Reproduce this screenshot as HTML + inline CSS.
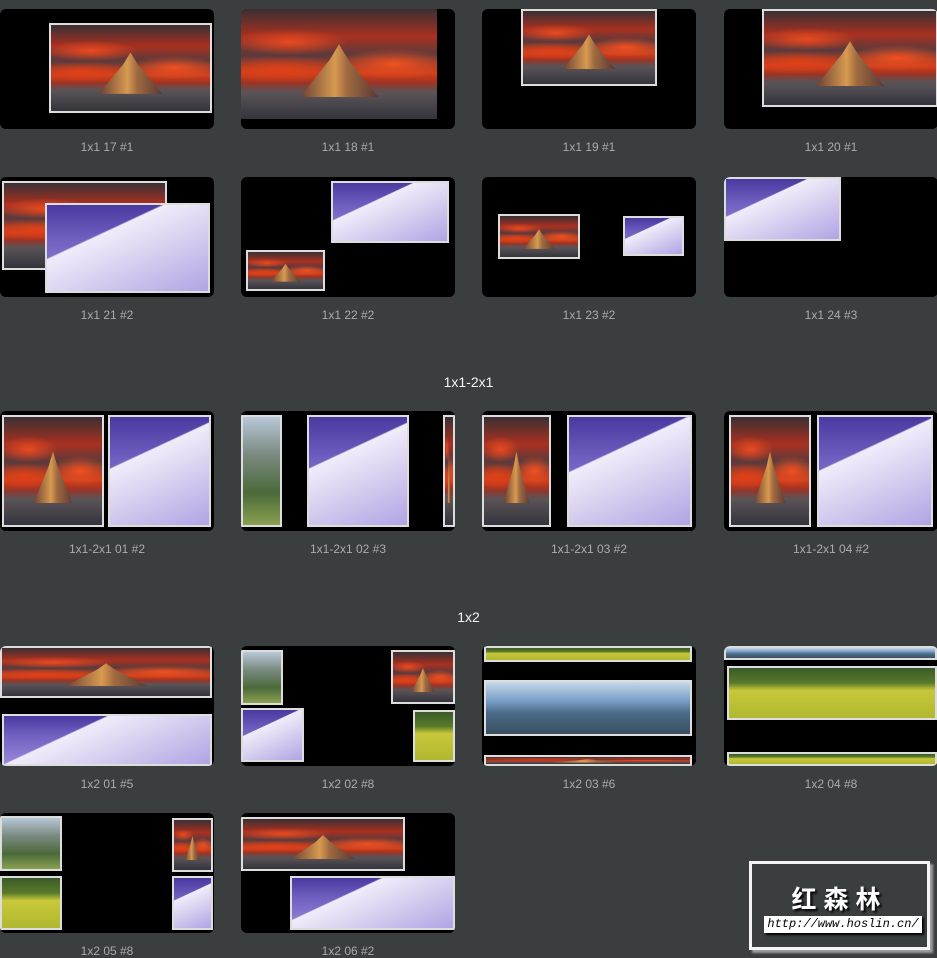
<!DOCTYPE html>
<html><head><meta charset="utf-8"><style>
*{margin:0;padding:0;box-sizing:border-box}
body{width:937px;height:954px;background:#3a3e3e;position:relative;overflow:hidden;font-family:"Liberation Sans",sans-serif}
.c{position:absolute;width:214px;height:120px;background:#000;border-radius:6px;overflow:hidden}
.i{position:absolute;overflow:hidden}
.b{border:2px solid #ddd}
.red{background:
 linear-gradient(180deg,transparent 66%,#5a5458 76%,#34343c 100%),
 radial-gradient(ellipse 30% 12% at 25% 30%,#e84a20,transparent),
 radial-gradient(ellipse 30% 14% at 78% 50%,#f05020,transparent),
 radial-gradient(ellipse 35% 12% at 20% 55%,#e04018,transparent),
 linear-gradient(180deg,#3a3034 0%,#a83020 25%,#5a3a3c 42%,#d0401c 58%,#a03020 68%)}
.red::after{content:"";position:absolute;left:30%;right:30%;top:32%;bottom:20%;background:linear-gradient(90deg,#6a4034,#d89a50 45%,#a06a40 60%,#5a3a34);clip-path:polygon(50% 0,62% 30%,100% 100%,0 100%,38% 30%)}
.snow{background:
 linear-gradient(155deg,transparent 33%,#f0ecfa 34%,#d8d0f0 60%,#b0a4e4 100%),
 linear-gradient(180deg,#4a3aa0 0%,#7060c0 40%,#9a88d8 100%)}
.grn{background:linear-gradient(180deg,#b8c8d8 0%,#7a8a80 35%,#4a6a3a 70%,#8aa050 100%)}
.yel{background:linear-gradient(180deg,#3a5a2a 0%,#5a7a2a 30%,#c8c83a 45%,#b0b830 100%)}
.blu{background:linear-gradient(180deg,#c8d8e8 0%,#7aa0c8 35%,#4a6a88 60%,#3a5060 100%)}
.l{position:absolute;width:214px;text-align:center;color:#a8acac;font-size:12px}
.h{position:absolute;width:937px;text-align:center;color:#f4f4f4;font-size:14px}
</style></head><body>

<div class="c" style="left:0;top:9px"><div class="i b red" style="left:49px;top:14px;width:163px;height:90px"></div></div>
<div class="c" style="left:241px;top:9px"><div class="i red" style="left:0;top:0;width:196px;height:110px"></div></div>
<div class="c" style="left:482px;top:9px"><div class="i b red" style="left:39px;top:0;width:136px;height:77px"></div></div>
<div class="c" style="left:724px;top:9px"><div class="i b red" style="left:38px;top:0;width:176px;height:98px"></div></div>
<div class="l" style="left:0;top:140px">1x1 17 #1</div>
<div class="l" style="left:241px;top:140px">1x1 18 #1</div>
<div class="l" style="left:482px;top:140px">1x1 19 #1</div>
<div class="l" style="left:724px;top:140px">1x1 20 #1</div>

<div class="c" style="left:0;top:177px"><div class="i b red" style="left:2px;top:4px;width:165px;height:89px"></div><div class="i b snow" style="left:45px;top:26px;width:165px;height:90px"></div></div>
<div class="c" style="left:241px;top:177px"><div class="i b snow" style="left:90px;top:4px;width:118px;height:62px"></div><div class="i b red" style="left:5px;top:73px;width:79px;height:41px"></div></div>
<div class="c" style="left:482px;top:177px"><div class="i b red" style="left:16px;top:37px;width:82px;height:45px"></div><div class="i b snow" style="left:141px;top:39px;width:61px;height:40px"></div></div>
<div class="c" style="left:724px;top:177px"><div class="i b snow" style="left:0;top:0;width:117px;height:64px"></div></div>
<div class="l" style="left:0;top:308px">1x1 21 #2</div>
<div class="l" style="left:241px;top:308px">1x1 22 #2</div>
<div class="l" style="left:482px;top:308px">1x1 23 #2</div>
<div class="l" style="left:724px;top:308px">1x1 24 #3</div>

<div class="h" style="top:374px">1x1-2x1</div>

<div class="c" style="left:0;top:411px"><div class="i b red" style="left:2px;top:4px;width:102px;height:112px"></div><div class="i b snow" style="left:108px;top:4px;width:103px;height:112px"></div></div>
<div class="c" style="left:241px;top:411px"><div class="i b grn" style="left:0;top:4px;width:41px;height:112px"></div><div class="i b snow" style="left:66px;top:4px;width:102px;height:112px"></div><div class="i b red" style="left:202px;top:4px;width:12px;height:112px"></div></div>
<div class="c" style="left:482px;top:411px"><div class="i b red" style="left:0;top:4px;width:69px;height:112px"></div><div class="i b snow" style="left:85px;top:4px;width:125px;height:112px"></div></div>
<div class="c" style="left:724px;top:411px"><div class="i b red" style="left:5px;top:4px;width:82px;height:112px"></div><div class="i b snow" style="left:93px;top:4px;width:116px;height:112px"></div></div>
<div class="l" style="left:0;top:542px">1x1-2x1 01 #2</div>
<div class="l" style="left:241px;top:542px">1x1-2x1 02 #3</div>
<div class="l" style="left:482px;top:542px">1x1-2x1 03 #2</div>
<div class="l" style="left:724px;top:542px">1x1-2x1 04 #2</div>

<div class="h" style="top:609px">1x2</div>

<div class="c" style="left:0;top:646px"><div class="i b red" style="left:0;top:0;width:212px;height:52px"></div><div class="i b snow" style="left:2px;top:68px;width:210px;height:52px"></div></div>
<div class="c" style="left:241px;top:646px"><div class="i b grn" style="left:0;top:4px;width:42px;height:55px"></div><div class="i b snow" style="left:0;top:62px;width:63px;height:54px"></div><div class="i b red" style="left:150px;top:4px;width:64px;height:54px"></div><div class="i b yel" style="left:172px;top:64px;width:42px;height:52px"></div></div>
<div class="c" style="left:482px;top:646px"><div class="i b yel" style="left:2px;top:0;width:208px;height:16px"></div><div class="i b blu" style="left:2px;top:34px;width:208px;height:56px"></div><div class="i b red" style="left:2px;top:109px;width:208px;height:11px"></div></div>
<div class="c" style="left:724px;top:646px"><div class="i b blu" style="left:0;top:0;width:213px;height:14px"></div><div class="i b yel" style="left:3px;top:20px;width:210px;height:54px"></div><div class="i b yel" style="left:3px;top:106px;width:210px;height:14px"></div></div>
<div class="l" style="left:0;top:777px">1x2 01 #5</div>
<div class="l" style="left:241px;top:777px">1x2 02 #8</div>
<div class="l" style="left:482px;top:777px">1x2 03 #6</div>
<div class="l" style="left:724px;top:777px">1x2 04 #8</div>

<div class="c" style="left:0;top:813px"><div class="i b grn" style="left:0;top:3px;width:62px;height:55px"></div><div class="i b yel" style="left:0;top:63px;width:62px;height:54px"></div><div class="i b red" style="left:172px;top:5px;width:41px;height:54px"></div><div class="i b snow" style="left:172px;top:63px;width:41px;height:54px"></div></div>
<div class="c" style="left:241px;top:813px"><div class="i b red" style="left:0;top:4px;width:164px;height:54px"></div><div class="i b snow" style="left:49px;top:63px;width:165px;height:54px"></div></div>
<div class="l" style="left:0;top:944px">1x2 05 #8</div>
<div class="l" style="left:241px;top:944px">1x2 06 #2</div>

<div style="position:absolute;left:749px;top:861px;width:181px;height:89px;border:3px solid #f4f4f4;background:#3a3e3e;box-shadow:3px 3px 2px rgba(255,255,255,.5)">
 <div style="position:absolute;left:0;right:0;top:16px;text-align:center;color:#fff;font-weight:bold;font-size:25px;letter-spacing:7px;font-family:'Liberation Sans','Noto Sans CJK SC',sans-serif;text-shadow:2px 2px 2px #000">红森林</div>
 <div style="position:absolute;left:12px;top:52px;width:158px;height:17px;background:#fff;color:#000;font-style:italic;font-size:12px;line-height:17px;text-align:center;font-family:'Liberation Mono',monospace;box-shadow:2px 2px 2px #000">http://www.hoslin.cn/</div>
</div>
</body></html>
